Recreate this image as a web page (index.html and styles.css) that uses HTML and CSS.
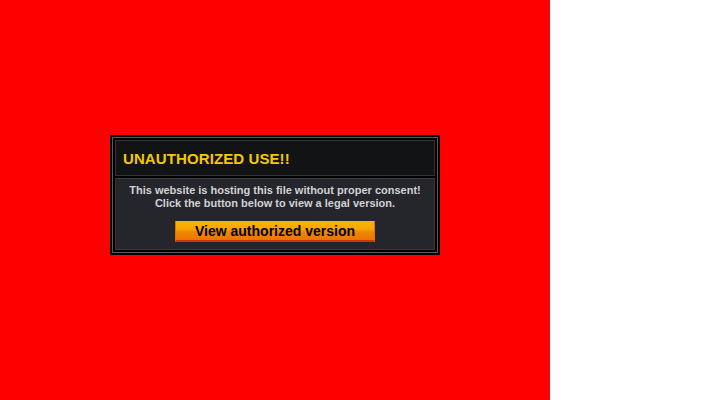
FILE: index.html
```html
<!DOCTYPE html>
<html>
<head>
<meta charset="utf-8">
<link rel="stylesheet" href="styles.css">
</head>
<body>
<div class="stage">
  <div class="box">
    <div class="frame">
      <div class="title">UNAUTHORIZED USE!!</div>
      <div class="content">
        <p class="msg">This website is hosting this file without proper consent!<br>Click the button below to view a legal version.</p>
        <div class="btn">View authorized version</div>
      </div>
    </div>
  </div>
</div>
</body>
</html>
```
FILE: styles.css
```css
html, body { margin: 0; padding: 0; background: #fff; }
.stage {
  width: 550px;
  height: 400px;
  background: #ff0000;
  padding: 135px 0 0 110px;
  box-sizing: border-box;
}
.box {
  width: 330px;
  height: 120px;
  box-sizing: border-box;
  background: #000;
  padding: 2px;
}
.frame {
  height: 100%;
  box-sizing: border-box;
  border: 1px solid #5a5a5a;
  padding: 2px;
  background: #000;
  display: flex;
  flex-direction: column;
  gap: 2px;
}
.title {
  height: 36px;
  box-sizing: border-box;
  background: #121314;
  border: 1px solid #34353a;
  border-left-color: #4a2a2e;
  border-right-color: #4a2a2e;
  color: #f6c800;
  font-family: "Liberation Sans", Arial, sans-serif;
  font-weight: bold;
  font-size: 15px;
  letter-spacing: 0.1px;
  padding: 1px 0 0 7px;
  display: flex;
  align-items: center;
}
.content {
  flex: 1;
  box-sizing: border-box;
  background: #25262b;
  border: 1px solid #3a3b40;
  border-left-color: #4a2a2e;
  border-right-color: #4a2a2e;
  display: flex;
  flex-direction: column;
  align-items: center;
}
.msg {
  margin: 5px 0 0;
  text-align: center;
  color: #d2d2d6;
  font-family: "Liberation Sans", Arial, sans-serif;
  font-weight: bold;
  font-size: 11px;
  line-height: 13px;
}
.btn {
  margin-top: 11px;
  width: 200px;
  height: 21px;
  box-sizing: border-box;
  background: linear-gradient(#f9b400 0%, #f7a600 45%, #f08800 55%, #ec7400 100%);
  border-bottom: 2px solid #c83a00;
  border-left: 1px solid #e07000;
  border-right: 1px solid #e07000;
  color: #000;
  font-family: "Liberation Sans", Arial, sans-serif;
  font-weight: bold;
  font-size: 14px;
  text-align: center;
  line-height: 20px;
}
```
